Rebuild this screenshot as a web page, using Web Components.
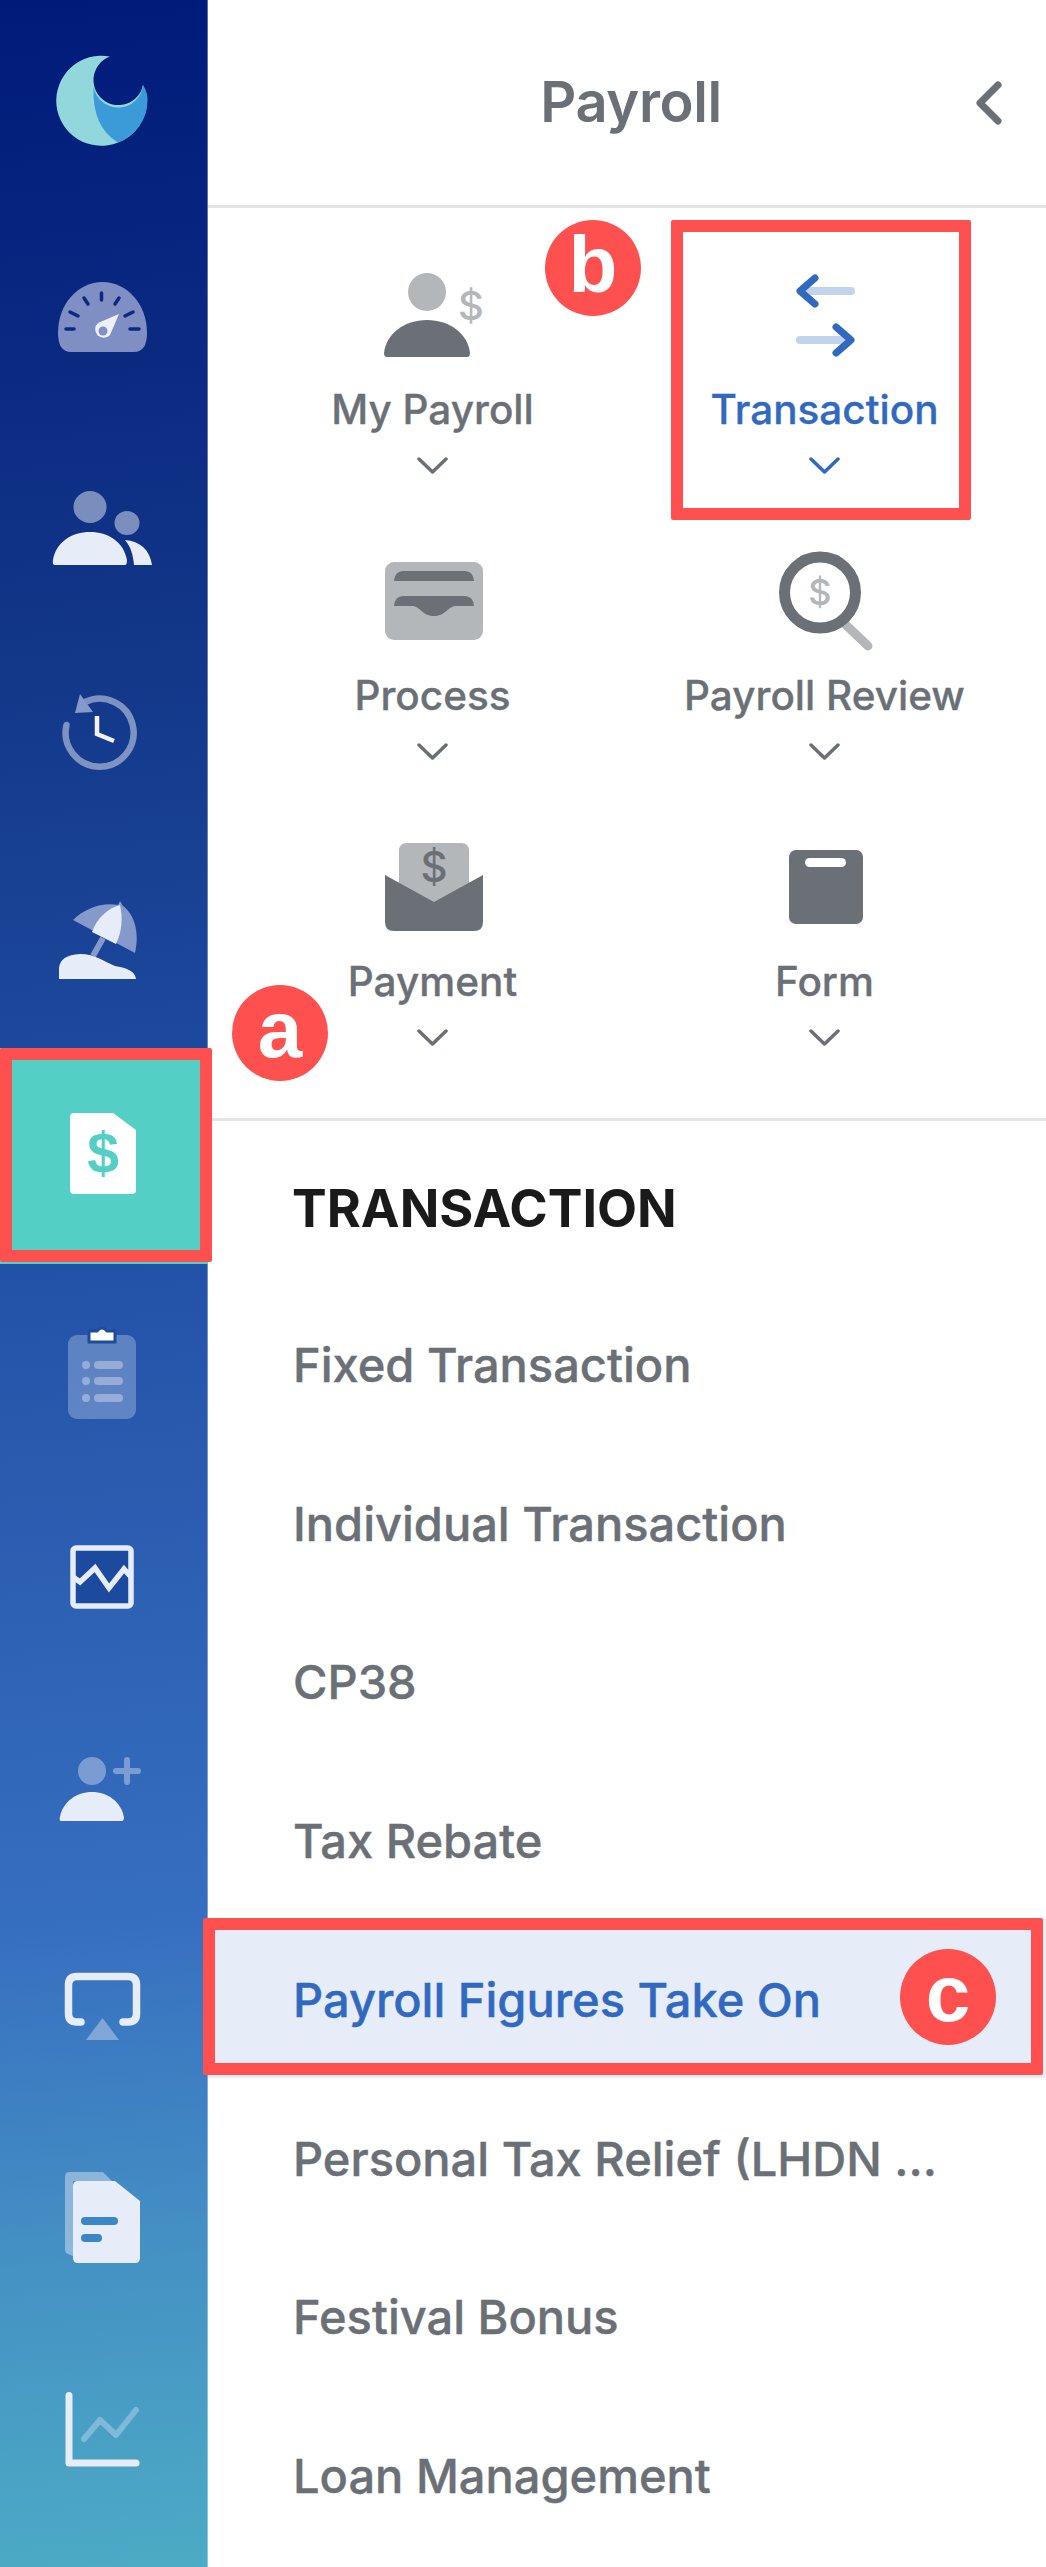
<!DOCTYPE html>
<html lang="en">
<head>
<meta charset="utf-8">
<title>Payroll</title>
<style>
  html, body { margin: 0; padding: 0; background: #fff; }
</style>
</head>
<body>
<app-shell>
  <side-nav slot="nav">
    <nav-item icon="moon" nudge="-4" height="209.6"></nav-item>
    <nav-item icon="gauge" nudge="3" height="209.6"></nav-item>
    <nav-item icon="people" nudge="4" height="209.6"></nav-item>
    <nav-item icon="history" nudge="-2" height="209.6"></nav-item>
    <nav-item icon="beach" nudge="-3" height="209.6"></nav-item>
    <nav-item icon="bill" nudge="-2" height="216" active></nav-item>
    <nav-item icon="clipboard" nudge="3"></nav-item>
    <nav-item icon="picture" nudge="-5"></nav-item>
    <nav-item icon="adduser" nudge="-5"></nav-item>
    <nav-item icon="cast" nudge="1"></nav-item>
    <nav-item icon="docs"></nav-item>
    <nav-item icon="chart"></nav-item>
  </side-nav>
  <panel-header slot="main">Payroll</panel-header>
  <menu-grid slot="main">
    <menu-tile icon="mypay">My Payroll</menu-tile>
    <menu-tile icon="arrows" active>Transaction</menu-tile>
    <menu-tile icon="process">Process</menu-tile>
    <menu-tile icon="review">Payroll Review</menu-tile>
    <menu-tile icon="payment">Payment</menu-tile>
    <menu-tile icon="form">Form</menu-tile>
  </menu-grid>
  <sub-menu slot="main" heading="TRANSACTION">
    <sub-item>Fixed Transaction</sub-item>
    <sub-item>Individual Transaction</sub-item>
    <sub-item>CP38</sub-item>
    <sub-item>Tax Rebate</sub-item>
    <sub-item active>Payroll Figures Take On</sub-item>
    <sub-item>Personal Tax Relief (LHDN ...</sub-item>
    <sub-item>Festival Bonus</sub-item>
    <sub-item>Loan Management</sub-item>
  </sub-menu>
</app-shell>

<script>
// icons are drawn in page coordinates, the viewBox just crops them out
const L = '#e6ecf8';
const DOLLAR = 'font-family="Liberation Sans, sans-serif" font-weight="700" text-anchor="middle"';
const THIN_DOLLAR = 'font-family="Inter, sans-serif" font-weight="500" text-anchor="middle"';
const NAV_ICONS = {
  moon: ['57 57 92 90', `
    <path fill="#91d7dc" d="M110 57.6A45 45 0 1 0 118 143.500A45 45 0 0 0 147 100L143 86A25 25 0 1 1 110 57.6Z"/>
    <path fill="#3b9bd9" d="M93.500 88A25 25 0 0 0 143 86Q148 94 147.500 102A45 45 0 0 1 118 143.500Q92 128 93.500 88Z"/>`],
  gauge: ['58 282 89 70', `
    <path fill="#7f8fc4" d="M58 333C58 304 78 282 102.500 282C127 282 147 304 147 333Q147 352 134 352H71Q58 352 58 333Z"/>
    <g stroke="#0b2a7f" stroke-width="3.500" stroke-linecap="round" fill="none">
      <path d="M66 329H74M70 312L78 316M84 298L88 304M101.500 293V300M119 298L115 304M133 312L125 316M130 329H139"/>
    </g>
    <path fill="#eef1fa" d="M119 314L110 335A8.500 8.500 0 1 1 98 323Z"/>
    <ellipse cx="103" cy="331" rx="4.500" ry="4.500" fill="#7f8fc4"/>`],
  people: ['52 491 100 74', `
    <ellipse cx="90" cy="507" rx="16.500" ry="16" fill="${L}" opacity=".5"/>
    <ellipse cx="127" cy="523" rx="12.500" ry="12" fill="${L}" opacity=".5"/>
    <path fill="${L}" d="M55 565Q52 565 53 560C56 542 72 532 90 532C108 532 124 542 127 560Q127 565 125 565Z"/>
    <path fill="${L}" d="M125 540C140 541 150 550 152 565H134C133 555 131 547 125 540Z"/>`],
  history: ['62 695 76 76', `
    <path fill="none" stroke="${L}" stroke-opacity=".5" stroke-width="6.500" stroke-linecap="round" d="M66.500 726A34 34 0 1 0 85 703"/>
    <path fill="#8599cb" d="M80 695L75 714L93 713Z"/>
    <path fill="none" stroke="#f0f3fb" stroke-width="4.500" d="M97 717V735L114 742"/>`],
  beach: ['59 901 79 78', `
    <path fill="#8599cb" d="M118 905L120 901L123 906C134 914 140 932 135 953L73 920C85 908 103 902 118 905Z"/>
    <path fill="${L}" d="M92 932C97 918 108 908 120 905C123 917 122 932 116 944Z"/>
    <path stroke="#8599cb" stroke-width="6" d="M93 956L103 938"/>
    <path fill="${L}" d="M59 979V968Q60 955 80 954C95 954 105 962 115 966C125 968 135 970 136 979Z"/>`],
  bill: ['70 1114 66 81', `
    <path fill="#fff" d="M74 1114H113L136 1131V1191Q136 1195 132 1195H74Q70 1195 70 1191V1118Q70 1114 74 1114Z"/>
    <text x="103" y="1174" font-size="57" fill="#54cfc5" ${DOLLAR}>$</text>`],
  clipboard: ['68 1326 68 93', `
    <rect x="68" y="1335" width="68" height="84" rx="9" fill="${L}" opacity=".3"/>
    <path fill="#fff" stroke="#1f4a9e" stroke-width="3" d="M89 1331H97Q102 1325 107 1331H115V1342H89Z"/>
    <g fill="${L}" opacity=".4">
      <circle cx="86" cy="1365" r="4"/><rect x="94" y="1361" width="29" height="8" rx="4"/>
      <circle cx="86" cy="1381" r="4"/><rect x="94" y="1377" width="29" height="8" rx="4"/>
      <circle cx="86" cy="1398" r="4"/><rect x="94" y="1394" width="29" height="8" rx="4"/>
    </g>`],
  picture: ['70 1545 64 64', `
    <rect x="73" y="1548" width="58" height="58" rx="3" fill="#1b4a9f" stroke="${L}" stroke-width="5.500"/>
    <path fill="none" stroke="${L}" stroke-width="5.500" d="M73 1577L80 1582L95 1568L109 1588L124 1569L131 1577"/>`],
  adduser: ['59 1757 82 64', `
    <ellipse cx="92" cy="1771" rx="14" ry="14" fill="${L}" opacity=".4"/>
    <path fill="none" stroke="${L}" stroke-opacity=".4" stroke-width="6" stroke-linecap="round" d="M116 1771H138M127 1760V1782"/>
    <path fill="${L}" d="M61 1821Q59 1821 60 1817C63 1802 76 1792 92 1792C108 1792 121 1802 124 1817Q124 1821 122 1821Z"/>`],
  cast: ['65 1974 75 67', `
    <path fill="none" stroke="${L}" stroke-width="7.500" stroke-linecap="round" d="M81 2023H77Q68.500 2023 68.500 2015V1986Q68.500 1977.500 77 1977.500H128Q136.500 1977.500 136.500 1986V2015Q136.500 2023 128 2023H123"/>
    <path fill="${L}" opacity=".4" d="M102.500 2019L119 2041H86Z"/>`],
  docs: ['65 2173 75 91', `
    <path fill="${L}" opacity=".45" d="M65 2178Q65 2173 70 2173H103L112 2182H73V2257L68 2255Q65 2254 65 2250Z"/>
    <path fill="${L}" d="M78 2182H115L140 2202V2259Q140 2264 135 2264H78Q73 2264 73 2259V2187Q73 2182 78 2182Z"/>
    <rect x="81" y="2218" width="37" height="8" rx="4" fill="#3b86c4"/>
    <rect x="81" y="2235" width="21" height="8" rx="4" fill="#3b86c4"/>`],
  chart: ['65 2393 75 75', `
    <path fill="none" stroke="${L}" stroke-width="7" stroke-linecap="round" stroke-linejoin="round" d="M69 2396.500V2464H136"/>
    <path fill="none" stroke="${L}" stroke-opacity=".35" stroke-width="6" stroke-linecap="round" stroke-linejoin="round" d="M84 2440L100 2421L116 2436L136 2411"/>`]
};

const D = '#6a7076', G = '#b3b7ba', B = '#3169c1';
const TILE_ICONS = {
  mypay: ['384 273 100 84', `
    <circle cx="427" cy="292" r="19" fill="${G}"/>
    <path fill="${D}" d="M387 357Q384 357 384 353C386 334 404 320 427 320C450 320 468 334 470 353Q470 357 467 357Z"/>
    <text x="471" y="320" font-size="40" fill="${G}" ${THIN_DOLLAR}>$</text>`],
  arrows: ['796 276 60 81', `
    <path stroke="#c2d3ec" stroke-width="8" stroke-linecap="round" d="M808 292H851M800 341H843"/>
    <path fill="none" stroke="${B}" stroke-width="7" stroke-linecap="round" stroke-linejoin="round" d="M815 279L800 292L815 305M836 328L851 341L836 354"/>`],
  process: ['384 562 98 78', `
    <rect x="384" y="562" width="98" height="78" rx="9" fill="${G}"/>
    <path fill="${D}" d="M393 581Q394 571 402 571H464Q472 571 473 581Z"/>
    <path fill="${D}" d="M393 606Q394 596 402 596H464Q472 596 473 606H455C447 606 445 616 433 616C421 616 419 606 411 606Z"/>`],
  review: ['779 553 94 99', `
    <path stroke="${G}" stroke-width="9" stroke-linecap="round" d="M845 625L868 647"/>
    <circle cx="820" cy="593.500" r="35.500" fill="#fff" stroke="${D}" stroke-width="11"/>
    <text x="820" y="606" font-size="36" fill="${G}" ${THIN_DOLLAR}>$</text>`],
  payment: ['384 843 98 88', `
    <path fill="${G}" d="M398 851Q398 843 406 843H460Q468 843 468 851V884L433 904L398 884Z"/>
    <text x="433" y="882" font-size="42" fill="${D}" ${THIN_DOLLAR}>$</text>
    <path fill="${D}" d="M384 875L433 902L482 875V922Q482 931 473 931H393Q384 931 384 922Z"/>`],
  form: ['789 850 74 74', `
    <rect x="789" y="850" width="74" height="74" rx="7" fill="${D}"/>
    <rect x="805" y="858" width="41" height="9" rx="4.500" fill="#fff"/>`]
};

function svgIcon([box, body]) {
  const [, , w, h] = box.split(' ');
  return `<svg xmlns="http://www.w3.org/2000/svg" viewBox="${box}" width="${w}" height="${h}">${body}</svg>`;
}

const TEXT_FONT = `Inter, 'Liberation Sans', sans-serif`;

class AppShell extends HTMLElement {
  constructor() {
    super();
    this.attachShadow({ mode: 'open' });
    this.shadowRoot.innerHTML = `
      <style>
        :host { display: flex; width: 1046px; height: 2567px; overflow: hidden; background: #fff; font-family: ${TEXT_FONT}; }
        .main { flex: 1; min-width: 0; display: flex; flex-direction: column; }
      </style>
      <slot name="nav"></slot>
      <div class="main"><slot name="main"></slot></div>
    `;
  }
}

class SideNav extends HTMLElement {
  constructor() {
    super();
    this.attachShadow({ mode: 'open' });
    this.shadowRoot.innerHTML = `
      <style>
        :host {
          display: flex;
          flex-direction: column;
          flex: 0 0 208px;
          width: 208px;
          height: 100%;
          background: linear-gradient(175deg, #001a7a 0%, #123688 25%, #2353a8 50%, #376fc0 75%, #4592c4 88%, #4cabc5 100%);
          box-shadow: inset -1px 0 0 rgba(255,255,255,.35);
        }
      </style>
      <slot></slot>
    `;
  }
}

class NavItem extends HTMLElement {
  constructor() {
    super();
    this.attachShadow({ mode: 'open' });
  }

  connectedCallback() {
    const nudge = Number(this.getAttribute('nudge') || 0);
    const height = this.getAttribute('height') || 212;
    const active = this.hasAttribute('active');
    const icon = NAV_ICONS[this.getAttribute('icon')];
    // keep each icon on its own x, they are not all on the rail's centre
    const [x, , w] = icon[0].split(' ').map(Number);
    const shiftX = 2 * (104 - (x + w / 2));
    this.shadowRoot.innerHTML = `
      <style>
        :host {
          display: flex;
          align-items: center;
          justify-content: center;
          flex: 0 0 ${height}px;
          position: relative;
          ${active ? 'background: #54cfc5;' : ''}
        }
        svg { display: block; margin-top: ${nudge * 2}px; margin-right: ${shiftX}px; overflow: visible; }
      </style>
      ${svgIcon(icon)}
      ${active ? '<call-box style="--l:0;--t:0;--w:212px;--h:214px"></call-box>' : ''}
    `;
  }
}

class PanelHeader extends HTMLElement {
  constructor() {
    super();
    this.attachShadow({ mode: 'open' });
    this.shadowRoot.innerHTML = `
      <style>
        :host {
          display: grid;
          grid-template-columns: 1fr auto 1fr;
          align-items: center;
          height: 205px;
          box-sizing: content-box;
          border-bottom: 3px solid #e4e4e4;
          color: #6a7076;
        }
        .title { grid-column: 2; padding: 0 0 2px 8px; font-size: 56px; font-weight: 600; letter-spacing: -.4px; }
        .back { justify-self: end; margin-right: 44px; display: block; }
      </style>
      <div class="title"><slot></slot></div>
      <svg class="back" width="26" height="44" viewBox="0 0 26 44"><path fill="none" stroke="#6a7076" stroke-width="7" stroke-linecap="round" stroke-linejoin="round" d="M22 4L4 22L22 40"/></svg>
    `;
  }
}

class MenuGrid extends HTMLElement {
  constructor() {
    super();
    this.attachShadow({ mode: 'open' });
    this.shadowRoot.innerHTML = `
      <style>
        :host {
          display: grid;
          position: relative;
          grid-template-columns: 392px 392px;
          grid-template-rows: 286px 286px auto;
          justify-content: center;
          padding: 57px 0 72px 3px;
          border-bottom: 3px solid #e4e4e4;
        }
      </style>
      <slot></slot>
      <call-box style="--l:463px;--t:12px;--w:300px;--h:300px"></call-box>
      <call-badge style="--l:337px;--t:12px">b</call-badge>
      <call-badge style="--l:24px;--t:777px">a</call-badge>
    `;
  }
}

class MenuTile extends HTMLElement {
  constructor() {
    super();
    this.attachShadow({ mode: 'open' });
  }

  connectedCallback() {
    const color = this.hasAttribute('active') ? B : D;
    this.shadowRoot.innerHTML = `
      <style>
        :host { display: flex; flex-direction: column; align-items: center; color: ${color}; }
        .icon { height: 100px; margin-left: 3px; display: flex; align-items: center; justify-content: center; }
        .icon svg { overflow: visible; }
        .label { margin-top: 20px; height: 50px; line-height: 50px; font-size: 40.500px; font-weight: 500; white-space: nowrap; -webkit-text-stroke: .3px currentColor; }
        .caret { display: block; margin-top: 22px; }
      </style>
      <div class="icon">${svgIcon(TILE_ICONS[this.getAttribute('icon')])}</div>
      <div class="label"><slot></slot></div>
      <svg class="caret" width="31" height="17" viewBox="0 0 31 17"><path fill="none" stroke="${color}" stroke-width="3.500" stroke-linecap="round" stroke-linejoin="round" d="M2 2L15.500 15L29 2"/></svg>
    `;
  }
}

class SubMenu extends HTMLElement {
  constructor() {
    super();
    this.attachShadow({ mode: 'open' });
  }

  connectedCallback() {
    this.shadowRoot.innerHTML = `
      <style>
        :host { display: block; }
        h2 { margin: 0; height: 163px; box-sizing: border-box; padding: 55px 0 0 84px; font-size: 52px; line-height: 66px; font-weight: 700; color: #1a1a1a; }
      </style>
      <h2>${this.getAttribute('heading')}</h2>
      <slot></slot>
    `;
  }
}

class SubItem extends HTMLElement {
  constructor() {
    super();
    this.attachShadow({ mode: 'open' });
  }

  connectedCallback() {
    const active = this.hasAttribute('active');
    this.shadowRoot.innerHTML = `
      <style>
        :host {
          display: flex;
          align-items: center;
          position: relative;
          height: 158.750px;
          padding-left: 85px;
          font-size: 47px;
          font-weight: 500;
          white-space: nowrap;
          -webkit-text-stroke: .4px currentColor;
          color: ${active ? B : '#6a7076'};
          background: ${active ? '#e6ecf8' : 'transparent'};
        }
        .text { padding-top: 2px; }
      </style>
      <span class="text"><slot></slot></span>
      ${active ? `<call-box style="--l:-5px;--t:-1px;--w:840px;--h:157px"></call-box>
      <call-badge style="--l:692px;--t:30px">c</call-badge>` : ''}
    `;
  }
}

// red annotation frame and lettered badge, these sit over the UI
class CallBox extends HTMLElement {
  constructor() {
    super();
    this.attachShadow({ mode: 'open' });
    this.shadowRoot.innerHTML = `
      <style>
        :host {
          display: block;
          position: absolute;
          z-index: 2;
          left: var(--l); top: var(--t);
          width: var(--w); height: var(--h);
          box-sizing: border-box;
          border: 12px solid #ff5050;
          border-radius: 2px;
        }
      </style>
    `;
  }
}

class CallBadge extends HTMLElement {
  constructor() {
    super();
    this.attachShadow({ mode: 'open' });
    this.shadowRoot.innerHTML = `
      <style>
        :host {
          display: flex;
          align-items: center;
          justify-content: center;
          position: absolute;
          z-index: 3;
          left: var(--l); top: var(--t);
          width: 96px; height: 96px;
          border-radius: 50%;
          background: #ff5050;
          color: #fff;
          -webkit-text-stroke: 0;
          font: 700 80px/1 'Liberation Sans', Arial, sans-serif;
        }
        span { display: block; margin-top: -6px; }
      </style>
      <span><slot></slot></span>
    `;
  }
}

customElements.define('app-shell', AppShell);
customElements.define('side-nav', SideNav);
customElements.define('nav-item', NavItem);
customElements.define('panel-header', PanelHeader);
customElements.define('menu-grid', MenuGrid);
customElements.define('menu-tile', MenuTile);
customElements.define('sub-menu', SubMenu);
customElements.define('sub-item', SubItem);
customElements.define('call-box', CallBox);
customElements.define('call-badge', CallBadge);
</script>
</body>
</html>
